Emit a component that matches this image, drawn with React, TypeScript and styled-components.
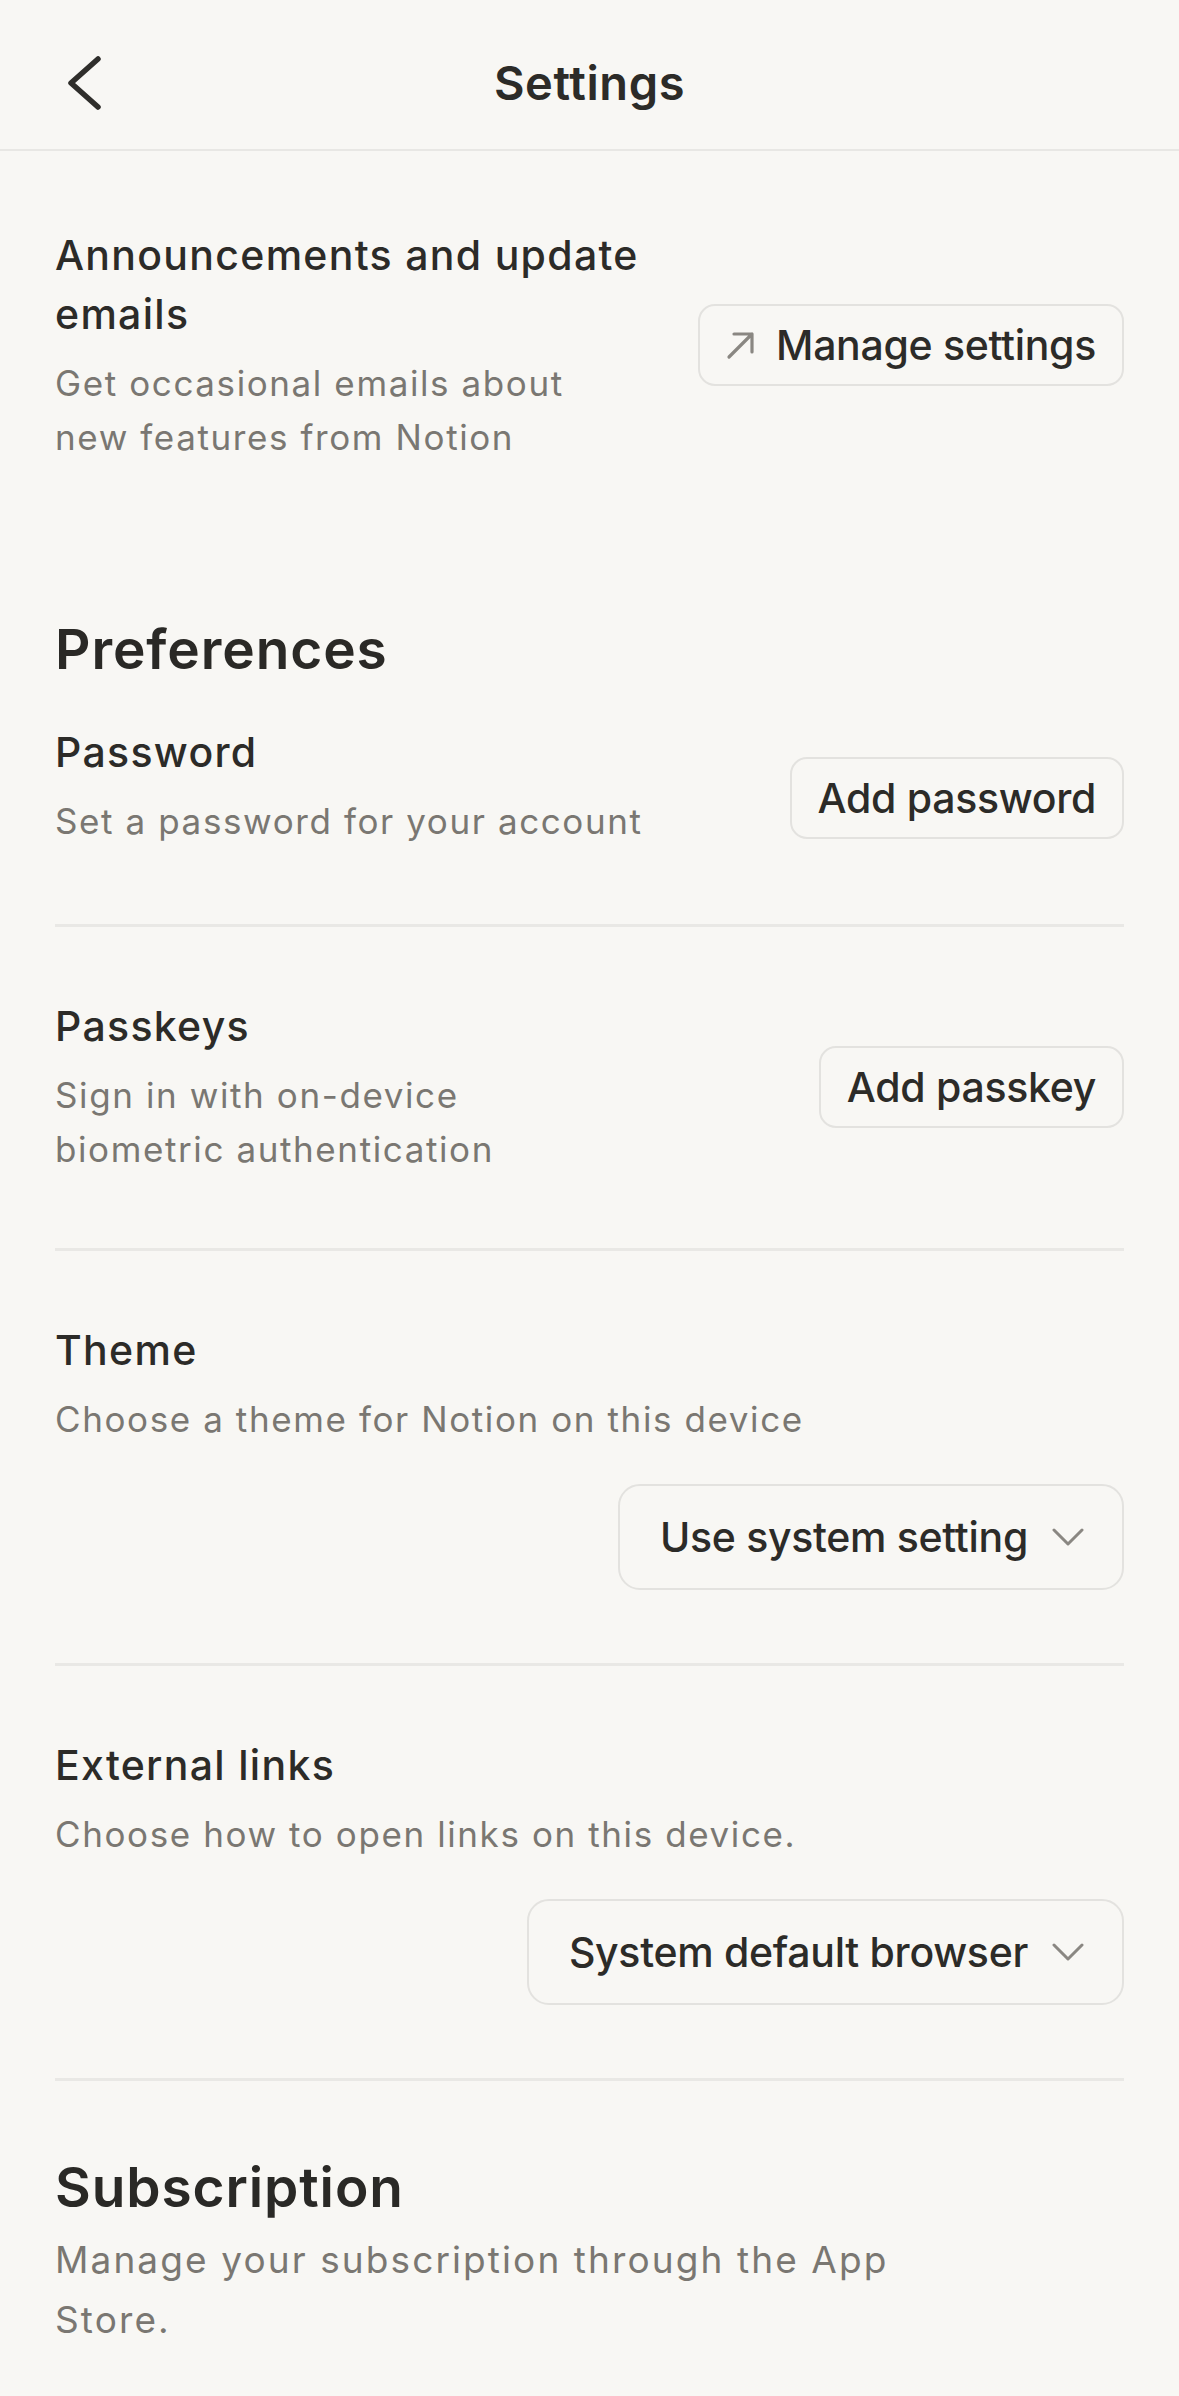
import React from "react";
import styled, { createGlobalStyle } from "styled-components";

const GlobalStyle = createGlobalStyle`
  html, body {
    margin: 0;
    padding: 0;
    background: #f8f7f4;
  }
  body {
    font-family: Inter, "Noto Sans", "Liberation Sans", sans-serif;
    color: #2c2b28;
    -webkit-font-smoothing: antialiased;
  }
  * { box-sizing: border-box; }
`;

const Page = styled.div`
  width: 1179px;
  min-height: 2396px;
  background: #f8f7f4;
`;

const NavBar = styled.header`
  height: 151px;
  padding-top: 17px;
  border-bottom: 2px solid #e8e7e4;
  display: grid;
  grid-template-columns: 200px 1fr 200px;
  align-items: center;
`;

const BackButton = styled.button`
  background: none;
  border: 0;
  padding: 0 0 0 67px;
  display: flex;
  align-items: center;
  cursor: pointer;
  color: #2f2e2b;
`;

const NavTitle = styled.h1`
  margin: 0;
  text-align: center;
  font-size: 47px;
  line-height: 56px;
  font-weight: 600;
  letter-spacing: 0.6px;
  color: #2c2b28;
`;

const Content = styled.main`
  padding: 0 55px;
`;

const OptionRow = styled.div<{ $pt: number; $pb: number; $divided?: boolean }>`
  display: flex;
  align-items: center;
  justify-content: space-between;
  gap: 40px;
  padding-top: ${(p) => p.$pt}px;
  padding-bottom: ${(p) => p.$pb}px;
  border-bottom: ${(p) => (p.$divided ? "3px solid #e9e8e5" : "none")};
`;

const OptionStack = styled.div<{ $pt: number; $pb: number; $divided?: boolean }>`
  display: flex;
  flex-direction: column;
  padding-top: ${(p) => p.$pt}px;
  padding-bottom: ${(p) => p.$pb}px;
  border-bottom: ${(p) => (p.$divided ? "3px solid #e9e8e5" : "none")};
`;

const TextCol = styled.div<{ $maxWidth?: number }>`
  display: flex;
  flex-direction: column;
  min-width: 0;
  max-width: ${(p) => (p.$maxWidth ? `${p.$maxWidth}px` : "none")};
`;

const Title = styled.div`
  font-size: 41px;
  line-height: 59px;
  font-weight: 500;
  letter-spacing: 1.3px;
  color: #2c2b28;
`;

const Desc = styled.div<{ $maxWidth?: number }>`
  margin-top: 12px;
  font-size: 35px;
  line-height: 54px;
  font-weight: 400;
  letter-spacing: 1.6px;
  color: #7a7772;
  max-width: ${(p) => (p.$maxWidth ? `${p.$maxWidth}px` : "none")};
`;

const SectionHeading = styled.h2<{ $mt: number }>`
  margin: ${(p) => p.$mt}px 0 0;
  font-size: 55px;
  line-height: 66px;
  font-weight: 600;
  letter-spacing: 0.9px;
  color: #2a2926;
`;

const SectionDesc = styled.p<{ $maxWidth: number }>`
  margin: 10px 0 0;
  font-size: 37px;
  line-height: 60px;
  font-weight: 400;
  letter-spacing: 2.1px;
  color: #7a7772;
  max-width: ${(p) => p.$maxWidth}px;
`;

const OutlineButton = styled.button<{ $offset?: number }>`
  flex: none;
  height: 82px;
  margin-top: ${(p) => p.$offset ?? 0}px;
  padding: 0 26px;
  display: inline-flex;
  align-items: center;
  gap: 20px;
  background: transparent;
  border: 2px solid #e3e2df;
  border-radius: 17px;
  font-family: inherit;
  font-size: 41px;
  font-weight: 500;
  letter-spacing: -0.3px;
  color: #2c2b28;
  white-space: nowrap;
`;

const Select = styled.button`
  align-self: flex-end;
  margin-top: 38px;
  height: 106px;
  padding: 0 38px 0 40px;
  display: inline-flex;
  align-items: center;
  gap: 24px;
  background: transparent;
  border: 2px solid #e3e2df;
  border-radius: 22px;
  font-family: inherit;
  font-size: 41px;
  font-weight: 500;
  letter-spacing: -0.3px;
  color: #2c2b28;
  white-space: nowrap;
`;

const ChevronLeft = () => (
  <svg width="36" height="54" viewBox="0 0 36 54" fill="none">
    <path d="M31 3 L4 27 L31 51" stroke="currentColor" strokeWidth="5.5" strokeLinecap="round" strokeLinejoin="round" />
  </svg>
);

const ArrowUpRight = () => (
  <svg width="30" height="30" viewBox="0 0 30 30" fill="none">
    <path d="M3 27 L26 4 M8 4 L26 4 L26 22" stroke="#8a8782" strokeWidth="3.2" strokeLinecap="round" strokeLinejoin="round" />
  </svg>
);

const ChevronDown = () => (
  <svg width="32" height="18" viewBox="0 0 32 18" fill="none">
    <path d="M2 2 L16 16 L30 2" stroke="#8a8782" strokeWidth="3" strokeLinecap="round" strokeLinejoin="round" />
  </svg>
);

export default function App() {
  return (
    <Page>
      <GlobalStyle />
      <NavBar>
        <BackButton aria-label="Back">
          <ChevronLeft />
        </BackButton>
        <NavTitle>Settings</NavTitle>
        <div />
      </NavBar>

      <Content>
        <OptionRow $pt={75} $pb={0}>
          <TextCol $maxWidth={640}>
            <Title>Announcements and update emails</Title>
            <Desc $maxWidth={540}>Get occasional emails about new features from Notion</Desc>
          </TextCol>
          <OutlineButton>
            <ArrowUpRight />
            Manage settings
          </OutlineButton>
        </OptionRow>

        <SectionHeading $mt={152}>Preferences</SectionHeading>

        <OptionRow $pt={41} $pb={76} $divided>
          <TextCol>
            <Title>Password</Title>
            <Desc>Set a password for your account</Desc>
          </TextCol>
          <OutlineButton $offset={25}>Add password</OutlineButton>
        </OptionRow>

        <OptionRow $pt={70} $pb={72} $divided>
          <TextCol>
            <Title>Passkeys</Title>
            <Desc $maxWidth={500}>Sign in with on-device biometric authentication</Desc>
          </TextCol>
          <OutlineButton>Add passkey</OutlineButton>
        </OptionRow>

        <OptionStack $pt={70} $pb={73} $divided>
          <Title>Theme</Title>
          <Desc>Choose a theme for Notion on this device</Desc>
          <Select>
            Use system setting
            <ChevronDown />
          </Select>
        </OptionStack>

        <OptionStack $pt={70} $pb={73} $divided>
          <Title>External links</Title>
          <Desc>Choose how to open links on this device.</Desc>
          <Select>
            System default browser
            <ChevronDown />
          </Select>
        </OptionStack>

        <SectionHeading $mt={73}>Subscription</SectionHeading>
        <SectionDesc $maxWidth={880}>Manage your subscription through the App Store.</SectionDesc>
      </Content>
    </Page>
  );
}
